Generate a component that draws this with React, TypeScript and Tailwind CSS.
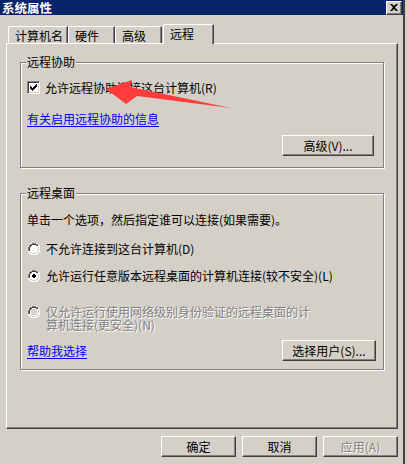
import React from "react";

function RaisedButton({
  children,
  className = "",
  disabled = false,
}: {
  children: React.ReactNode;
  className?: string;
  disabled?: boolean;
}) {
  return (
    <div
      className={
        "h-[21px] flex items-center justify-center bg-[#d4d0c8] border-t border-l border-t-white border-l-white border-r border-b border-r-[#404040] border-b-[#404040] shadow-[inset_-1px_-1px_0_#808080] " +
        (disabled ? "text-[#808080] [text-shadow:1px_1px_0_#ffffff] " : "text-black ") +
        className
      }
    >
      {children}
    </div>
  );
}

function Radio({ checked = false, disabled = false }: { checked?: boolean; disabled?: boolean }) {
  return (
    <svg width="12" height="12" viewBox="0 0 12 12" className="shrink-0">
      <path d="M4 0h4l2 1 1 1 1 2v4l-1 2-1 1-2 1H4L2 11 1 10 0 8V4l1-2 1-1z" fill="#ffffff" />
      <path d="M4 0h4v1H4zM2 1h2v1H2zM8 1h2v1H8zM1 2h1v2H1zM0 4h1v4H0z" fill="#808080" />
      <path d="M4 1h4v1H4zM2 2h2v1H2zM8 2h2v1H8zM2 3h1v1H2zM1 4h1v4H1z" fill="#404040" />
      <path d="M10 2h1v2h-1zM11 4h1v4h-1zM10 8h1v2h-1zM8 10h2v1H8zM4 11h4v1H4zM2 10h2v1H2z" fill="#ffffff" />
      <path d="M10 4h1v4h-1zM9 8h1v1H9zM8 9h2v1H8zM4 10h4v1H4zM2 9h2v1H2z" fill="#d4d0c8" />
      <circle cx="6" cy="6" r="3.2" fill={disabled ? "#d4d0c8" : "#ffffff"} />
      {checked && <path d="M5 4h2v1h1v2H7v1H5V7H4V5h1z" fill="#000000" />}
    </svg>
  );
}

function Checkbox() {
  return (
    <div className="w-[13px] h-[13px] shrink-0 bg-white border-t border-l border-t-[#808080] border-l-[#808080] border-r border-b border-r-white border-b-white shadow-[inset_1px_1px_0_#404040,inset_-1px_-1px_0_#d4d0c8] flex items-center justify-center">
      <svg width="7" height="7" viewBox="0 0 7 7">
        <path d="M0 2h1v1h1v1h1V3h1V2h1V1h1V0h1v3H6v1H5v1H4v1H3v1H2V6H1V5H0z" fill="#000" />
      </svg>
    </div>
  );
}

export default function App() {
  return (
    <div className="relative w-[407px] h-[464px] bg-[#d4d0c8] flex overflow-hidden font-['Noto_Sans_CJK_SC',sans-serif] text-[12px] leading-[12px] text-black">
      <div className="w-[403px] flex flex-col shrink-0">
        {/* Title bar */}
        <div className="h-[15px] w-[403px] bg-[#0a246a] flex items-center justify-between pl-[2px] pr-[1px]">
          <span className="text-white font-bold text-[12.5px] leading-[15px] h-[15px]">系统属性</span>
          <div className="w-[16px] h-[14px] bg-[#d4d0c8] border-t border-l border-t-white border-l-white border-r border-b border-r-[#404040] border-b-[#404040] shadow-[inset_-1px_-1px_0_#808080] flex items-center justify-center">
            <svg width="8" height="7" viewBox="0 0 8 7">
              <path d="M0 0h2l2 2 2-2h2L5 3.5 8 7H6L4 5 2 7H0l3-3.5z" fill="#000" />
            </svg>
          </div>
        </div>

        {/* Tabs */}
        <div className="relative z-10 mt-[9px] -mb-[1px] ml-[8px] h-[20px] flex items-end">
          <div className="w-[60px] h-[17px] mb-[1px] pl-[6px] pt-[3px] border-t border-l border-t-white border-l-white border-r border-r-[#404040] shadow-[inset_-1px_0_0_#808080] rounded-tl-[2px]">
            计算机名
          </div>
          <div className="w-[47px] h-[17px] mb-[1px] pl-[6px] pt-[3px] border-t border-l border-t-white border-l-white border-r border-r-[#404040] shadow-[inset_-1px_0_0_#808080] rounded-tl-[2px]">
            硬件
          </div>
          <div className="w-[47px] h-[17px] mb-[1px] pl-[6px] pt-[3px] border-t border-l border-t-white border-l-white border-r border-r-[#404040] shadow-[inset_-1px_0_0_#808080] rounded-tl-[2px]">
            高级
          </div>
          <div className="ml-[1px] w-[51px] h-[20px] pl-[6px] pt-[3px] bg-[#d4d0c8] border-t border-l border-t-white border-l-white border-r border-r-[#404040] shadow-[inset_-1px_0_0_#808080] rounded-tl-[2px]">
            远程
          </div>
        </div>

        {/* Panel */}
        <div className="ml-[6px] w-[392px] h-[386px] border-t border-l border-t-white border-l-white border-r border-b border-r-[#404040] border-b-[#404040] shadow-[inset_-1px_-1px_0_#808080] flex flex-col pl-[13px] pt-[18px]">
          {/* Group 1 */}
          <div className="relative w-[364px] h-[106px] border border-[#808080] shadow-[inset_1px_1px_0_#ffffff,1px_1px_0_#ffffff] flex flex-col">
            <span className="absolute left-[5px] -top-[7px] bg-[#d4d0c8] px-[1px]">远程协助</span>
            <div className="mt-[18px] ml-[6px] h-[13px] flex items-center gap-[5px]">
              <Checkbox />
              <span>允许远程协助连接这台计算机(R)</span>
            </div>
            <div className="mt-[19px] ml-[6px] h-[12px]">
              <span className="text-[#0000ff] underline underline-offset-[2px]">有关启用远程协助的信息</span>
            </div>
            <div className="mt-[10px] self-end mr-[9px]">
              <RaisedButton className="w-[92px]">高级(V)...</RaisedButton>
            </div>
          </div>

          {/* Group 2 */}
          <div className="relative mt-[25px] w-[364px] h-[177px] border border-[#808080] shadow-[inset_1px_1px_0_#ffffff,1px_1px_0_#ffffff] flex flex-col">
            <span className="absolute left-[5px] -top-[7px] bg-[#d4d0c8] px-[1px]">远程桌面</span>
            <div className="mt-[20px] ml-[6px] h-[12px]">单击一个选项，然后指定谁可以连接(如果需要)。</div>
            <div className="mt-[16px] ml-[7px] h-[13px] flex items-center gap-[6px]">
              <Radio />
              <span>不允许连接到这台计算机(D)</span>
            </div>
            <div className="mt-[14px] ml-[7px] h-[13px] flex items-center gap-[6px]">
              <Radio checked />
              <span>允许运行任意版本远程桌面的计算机连接(较不安全)(L)</span>
            </div>
            <div className="mt-[24px] ml-[7px] flex items-start gap-[6px]">
              <div className="pt-[0px]">
                <Radio disabled />
              </div>
              <div className="flex flex-col text-[#808080] [text-shadow:1px_1px_0_#ffffff]">
                <div className="h-[13px] leading-[12px]">仅允许运行使用网络级别身份验证的远程桌面的计</div>
                <div className="h-[12px] leading-[12px]">算机连接(更安全)(N)</div>
              </div>
            </div>
            <div className="mt-[9px] ml-[6px] mr-[7px] h-[21px] flex items-center justify-between">
              <span className="text-[#0000ff] underline underline-offset-[2px]">帮助我选择</span>
              <RaisedButton className="w-[94px]">选择用户(S)...</RaisedButton>
            </div>
          </div>
        </div>

        {/* Bottom buttons */}
        <div className="mt-[7px] pr-[5px] flex justify-end gap-[6px]">
          <RaisedButton className="w-[75px]">确定</RaisedButton>
          <RaisedButton className="w-[75px]">取消</RaisedButton>
          <RaisedButton className="w-[75px]" disabled>
            应用(A)
          </RaisedButton>
        </div>
      </div>
      <div className="w-[2px] h-full bg-[#404040] shrink-0" />
      <div className="w-[2px] h-full bg-[#d4d0c8] shrink-0" />

      {/* Red annotation arrow */}
      <svg className="absolute left-0 top-0 pointer-events-none" width="407" height="464" viewBox="0 0 407 464">
        <polygon points="106,89 132,80 130,87 231,108 137,96 126,104" fill="#ff3b3b" />
      </svg>
    </div>
  );
}
